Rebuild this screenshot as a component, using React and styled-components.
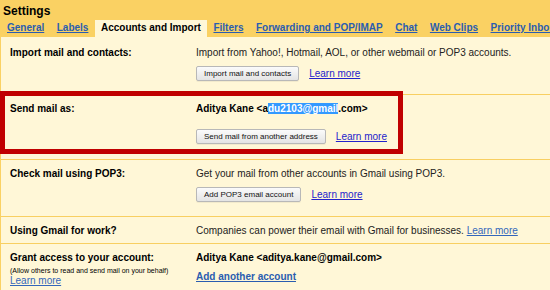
import React from "react";
import styled, { createGlobalStyle } from "styled-components";

const GlobalStyle = createGlobalStyle`
  html, body { margin: 0; padding: 0; }
  body {
    background: #fad163;
    font-family: "Liberation Sans", Arial, sans-serif;
    width: 550px;
    height: 290px;
    overflow: hidden;
  }
`;

const Page = styled.div`
  padding-top: 4px;
  width: 560px;
`;

const Title = styled.div`
  font-size: 12px;
  font-weight: bold;
  line-height: 15px;
  padding-left: 3px;
  margin-bottom: 1px;
  color: #000;
`;

const Tabs = styled.div`
  display: flex;
  padding-left: 1px;
  white-space: nowrap;
`;

const Tab = styled.a`
  display: block;
  padding: 2px 6.5px 3px 6px;
  line-height: 12px;
  font-size: 10px;
  font-weight: bold;
  color: ${(p) => (p.$active ? "#000" : "#2a5db0")};
  text-decoration: ${(p) => (p.$active ? "none" : "underline")};
  background: ${(p) => (p.$active ? "#fff7d7" : "transparent")};
`;

const Panel = styled.div`
  background: #fff7d7;
  margin-left: 1px;
  padding-top: 2px;
`;

const Row = styled.div`
  position: relative;
  display: grid;
  grid-template-columns: 186px 1fr;
  padding: 8px 0 ${(p) => p.$pb ?? 14}px 9px;
  border-top: ${(p) => (p.$first ? "none" : "1px solid #f8cf61")};
  font-size: 10px;
  line-height: 12px;
`;

const Label = styled.div`
  font-weight: bold;
  color: #000;
`;

const Side = styled.div`
  display: flex;
  flex-direction: column;
  align-items: flex-start;
`;

const Note = styled.div`
  font-size: 7px;
  line-height: 9px;
  margin-top: 2px;
  color: #000;
  white-space: nowrap;
`;

const Value = styled.div`
  display: flex;
  flex-direction: column;
  align-items: flex-start;
  color: #222;
  white-space: nowrap;
`;

const Strong = styled.div`
  font-weight: bold;
  color: #000;
`;

const Selected = styled.span`
  background: #3399ff;
  color: #fff;
`;

const Actions = styled.div`
  display: flex;
  align-items: center;
  gap: 10px;
  margin-top: ${(p) => p.$mt ?? 7}px;
`;

const Button = styled.button`
  height: 15px;
  box-sizing: border-box;
  padding: 0 7px;
  border: 1px solid #b8b8b8;
  border-radius: 2px;
  background: linear-gradient(#fbfbfb, #e4e4e4);
  font-family: "Liberation Sans", Arial, sans-serif;
  font-size: 8px;
  line-height: 13px;
  color: #111;
  box-shadow: 0 1px 0 rgba(0, 0, 0, 0.05);
`;

const Link = styled.a`
  color: ${(p) => p.$color ?? "#2323cc"};
  text-decoration: underline;
  font-weight: ${(p) => (p.$bold ? "bold" : "normal")};
  cursor: pointer;
`;

const Highlight = styled.div`
  position: absolute;
  left: -1px;
  top: -4px;
  width: 403px;
  height: 63px;
  box-sizing: border-box;
  border: 5px solid #c00000;
  pointer-events: none;
`;

const tabs = [
  "General",
  "Labels",
  "Accounts and Import",
  "Filters",
  "Forwarding and POP/IMAP",
  "Chat",
  "Web Clips",
  "Priority Inbox",
];

export default function App() {
  return (
    <>
      <GlobalStyle />
      <Page>
        <Title>Settings</Title>
        <Tabs>
          {tabs.map((t) => (
            <Tab key={t} $active={t === "Accounts and Import"}>
              {t}
            </Tab>
          ))}
        </Tabs>
        <Panel>
          <Row $first $pb={13}>
            <Label>Import mail and contacts:</Label>
            <Value>
              <div>Import from Yahoo!, Hotmail, AOL, or other webmail or POP3 accounts.</div>
              <Actions>
                <Button>Import mail and contacts</Button>
                <Link>Learn more</Link>
              </Actions>
            </Value>
          </Row>
          <Row $pb={15}>
            <Highlight />
            <Label>Send mail as:</Label>
            <Value>
              <Strong>
                Aditya Kane &lt;a<Selected>du2103@gmail</Selected>.com&gt;
              </Strong>
              <Actions $mt={14}>
                <Button>Send mail from another address</Button>
                <Link>Learn more</Link>
              </Actions>
            </Value>
          </Row>
          <Row>
            <Label>Check mail using POP3:</Label>
            <Value>
              <div>Get your mail from other accounts in Gmail using POP3.</div>
              <Actions>
                <Button>Add POP3 email account</Button>
                <Link>Learn more</Link>
              </Actions>
            </Value>
          </Row>
          <Row $pb={6}>
            <Label>Using Gmail for work?</Label>
            <Value>
              <div>
                Companies can power their email with Gmail for businesses.{" "}
                <Link $color="#3366bb">Learn more</Link>
              </div>
            </Value>
          </Row>
          <Row $pb={10}>
            <Side>
              <Label>Grant access to your account:</Label>
              <Note>(Allow others to read and send mail on your behalf)</Note>
              <Link $color="#3366bb">Learn more</Link>
            </Side>
            <Value>
              <Strong>Aditya Kane &lt;aditya.kane@gmail.com&gt;</Strong>
              <Actions $mt={7}>
                <Link $bold $color="#2a5db0">Add another account</Link>
              </Actions>
            </Value>
          </Row>
        </Panel>
      </Page>
    </>
  );
}
